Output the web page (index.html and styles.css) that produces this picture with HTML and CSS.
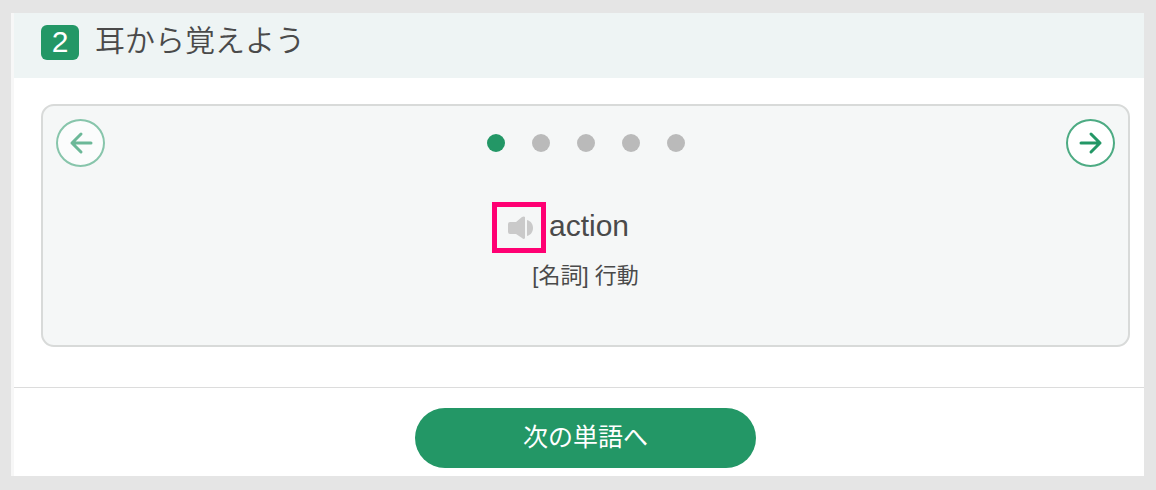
FILE: index.html
```
<!DOCTYPE html>
<html lang="ja">
<head>
    <meta charset="UTF-8">
    <meta name="viewport" content="width=device-width, initial-scale=1.0">
    <title>耳から覚えよう</title>
    <link rel="stylesheet" href="styles.css">
</head>
<body>
    <main class="lesson">
        <!-- Step heading -->
        <header class="step-header">
            <span class="step-number">2</span>
            <h1 class="step-title">耳から覚えよう</h1>
        </header>

        <!-- Word card -->
        <section class="card">
            <div class="card-nav">
                <button class="arrow-btn prev" type="button" aria-label="前の単語" disabled>
                    <svg viewBox="0 0 24 24" width="24" height="24">
                        <path d="M22 12H3M12 3L3 12L12 21"/>
                    </svg>
                </button>
                <ul class="dots">
                    <li class="dot active"></li>
                    <li class="dot"></li>
                    <li class="dot"></li>
                    <li class="dot"></li>
                    <li class="dot"></li>
                </ul>
                <button class="arrow-btn" type="button" aria-label="次の単語">
                    <svg viewBox="0 0 24 24" width="24" height="24">
                        <path d="M2 12H21M12 3L21 12L12 21"/>
                    </svg>
                </button>
            </div>
            <div class="word-row">
                <button class="sound-btn" type="button" aria-label="音声を再生">
                    <svg viewBox="0 0 26 24" width="26" height="24">
                        <path d="M2 6H8L14 1Q16 0 17 1V22Q16 24 14 22L8 18H2Q0 18 0 16V8Q0 6 2 6Z"/>
                        <path d="M19 4C27 6 27 18 19 20Z"/>
                    </svg>
                </button>
                <p class="word" lang="en">action</p>
            </div>
            <p class="meaning">[名詞] 行動</p>
        </section>

        <!-- Footer -->
        <footer class="lesson-footer">
            <button class="next-btn" type="button">次の単語へ</button>
        </footer>
    </main>
</body>
</html>
```
FILE: styles.css
```
* {
    box-sizing: border-box;
}

body {
    margin: 0;
    padding: 13px 12px 14px 11px;
    background: #e5e5e5;
    color: #4a4a4a;
    font-family: "Liberation Sans", "Noto Sans CJK JP", sans-serif;
}

.lesson {
    background: #fff;
    border-left: 3px solid #f7f7f7;
}

/* Step heading */
.step-header {
    display: flex;
    align-items: flex-start;
    gap: 16px;
    height: 65px;
    padding: 12px 27px;
    background: #eef4f4;
}

.step-number {
    width: 38px;
    height: 35px;
    border-radius: 6px;
    background: #239766;
    color: #fff;
    font-size: 30px;
    line-height: 34px;
    text-align: center;
}

.step-title {
    margin: 0;
    font-size: 30px;
    font-weight: 350;
    line-height: 32px;
}

/* Word card */
.card {
    height: 243px;
    margin: 26px 14px 40px 27px;
    padding: 13px;
    border: 2px solid #d8dad9;
    border-radius: 13px;
    background: #f5f7f7;
    text-align: center;
}

.card-nav {
    display: flex;
    justify-content: space-between;
    align-items: center;
}

.arrow-btn {
    display: flex;
    justify-content: center;
    align-items: center;
    width: 49px;
    height: 48px;
    padding: 0;
    border: 2px solid #4dab83;
    border-radius: 50%;
    background: #fff;
    cursor: pointer;
}

.arrow-btn path {
    fill: none;
    stroke: #239766;
    stroke-width: 3;
    stroke-linecap: round;
    stroke-linejoin: round;
}

.arrow-btn.prev {
    opacity: 0.65;
    cursor: default;
}

.dots {
    display: flex;
    gap: 27px;
    margin: 0;
    padding: 0;
    list-style: none;
}

.dot {
    width: 18px;
    height: 18px;
    border-radius: 50%;
    background: #bababa;
}

.dot.active {
    background: #239766;
}

.word-row {
    display: grid;
    grid-template-columns: 1fr auto 1fr;
    column-gap: 3px;
    margin-top: 35px;
    padding-left: 7px;
}

.sound-btn {
    display: flex;
    justify-content: center;
    align-items: center;
    justify-self: end;
    width: 54px;
    height: 51px;
    padding: 0 0 0 5px;
    border: 5px solid #ff0073;
    background: none;
    cursor: pointer;
}

.sound-btn path {
    fill: #cacaca;
}

.word {
    margin: 0;
    font-size: 30px;
    line-height: 48px;
}

.meaning {
    margin: 7px 0 0;
    font-size: 22px;
    line-height: 32px;
}

/* Footer */
.lesson-footer {
    padding: 20px 14px 8px 27px;
    border-top: 1px solid #dcdcdc;
    text-align: center;
}

.next-btn {
    display: block;
    width: 341px;
    max-width: 100%;
    height: 60px;
    margin: 0 auto;
    padding: 0 0 6px;
    border: none;
    border-radius: 30px;
    background: #239766;
    color: #fff;
    font-family: inherit;
    font-size: 25px;
    cursor: pointer;
}
```
